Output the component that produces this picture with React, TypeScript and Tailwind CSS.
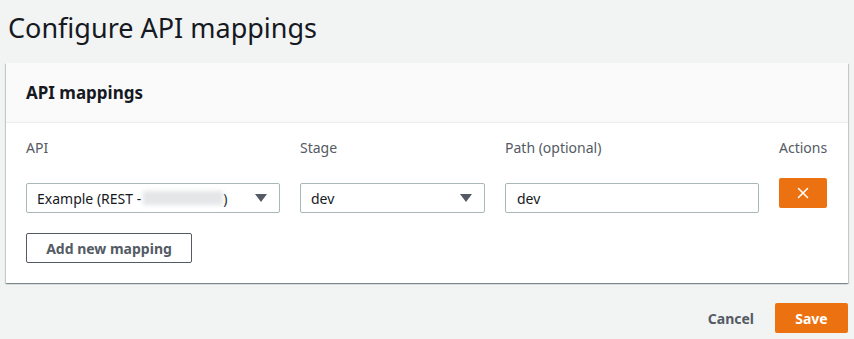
import { X } from 'lucide-react'

const Caret = () => (
  <svg width="12" height="8" viewBox="0 0 12 8" className="text-[#545b64]">
    <path d="M0 0h12L6 8z" fill="currentColor" />
  </svg>
)

export default function App() {
  return (
    <div
      className="min-h-[339px] bg-[#f2f3f3] text-[#16191f] px-[6px]"
      style={{ fontFamily: '"Noto Sans", Roboto, sans-serif' }}
    >
      <h1 className="pt-[10px] pl-[2px] text-[27px] leading-[36px] text-[#16191f]">Configure API mappings</h1>

      <div className="mt-[17px] bg-white shadow-[0_1px_1px_0_rgba(0,28,36,0.3),1px_1px_1px_0_rgba(0,28,36,0.15),-1px_1px_1px_0_rgba(0,28,36,0.15)]">
        <div className="h-[60px] bg-[#fafafa] border-b border-[#eaeded] px-[20px] flex items-center">
          <h2 className="text-[17px] font-bold leading-[22px]">API mappings</h2>
        </div>

        <div className="px-[20px] pt-[15px] pb-[20px]">
          <div className="flex text-[14px] text-[#545b64] leading-[20px]">
            <div className="w-[254px] shrink-0">API</div>
            <div className="w-[185px] shrink-0 ml-[20px]">Stage</div>
            <div className="w-[254px] shrink-0 ml-[20px]">Path (optional)</div>
            <div className="ml-[20px]">Actions</div>
          </div>

          <div className="flex items-start mt-[20px]">
            <div className="w-[254px] shrink-0 h-[30px] mt-[5px] border border-[#aab7b8] rounded-[2px] flex items-center justify-between pl-[10px] pr-[12px] text-[14px]">
              <span className="flex items-center">
                Example (REST -
                <span className="inline-block w-[80px] h-[14px] ml-[2px] bg-[#e4e6e8] blur-[2px]" />
                )
              </span>
              <Caret />
            </div>
            <div className="w-[185px] shrink-0 h-[30px] mt-[5px] ml-[20px] border border-[#aab7b8] rounded-[2px] flex items-center justify-between pl-[10px] pr-[12px] text-[14px]">
              <span>dev</span>
              <Caret />
            </div>
            <div className="w-[254px] shrink-0 h-[30px] mt-[5px] ml-[20px] border border-[#aab7b8] rounded-[2px] flex items-center pl-[11px] text-[14px]">
              dev
            </div>
            <button className="w-[48px] shrink-0 h-[30px] ml-[20px] bg-[#ec7211] rounded-[2px] flex items-center justify-center text-white">
              <X size={18} strokeWidth={2} />
            </button>
          </div>

          <button className="mt-[20px] w-[166px] h-[30px] border border-[#545b64] rounded-[2px] text-[14px] font-bold text-[#545b64] bg-white">
            Add new mapping
          </button>
        </div>
      </div>

      <div className="flex justify-end items-center mt-[20px] gap-[21px]">
        <span className="text-[14px] font-bold text-[#545b64]">Cancel</span>
        <button className="w-[73px] h-[30px] bg-[#ec7211] rounded-[2px] text-[14px] font-bold text-white">Save</button>
      </div>
    </div>
  )
}
